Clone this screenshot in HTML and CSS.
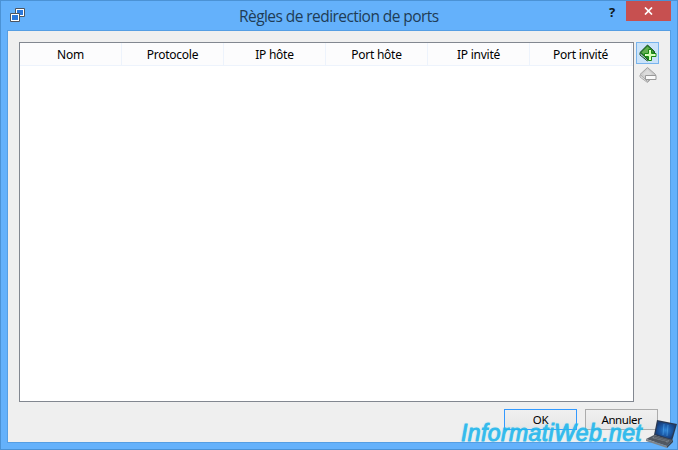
FILE: index.html
```
<!DOCTYPE html>
<html lang="fr">
<head>
<meta charset="utf-8">
<title>Règles de redirection de ports</title>
<link rel="stylesheet" href="styles.css">
</head>
<body>
<div class="window">
  <header class="titlebar">
    <svg class="app-icon" width="16" height="16" viewBox="0 0 16 16">
      <path d="M5.500 1.500h9v8h-9z" fill="#fff" stroke="#4c5560" />
      <path d="M7 3h6v5H7z" fill="#2b78dc"/>
      <path d="M.5 6.500h9v8h-9z" fill="#fff" stroke="#4c5560"/>
      <path d="M2 8h6v5H2z" fill="#2b78dc"/>
    </svg>
    <h1 class="title">Règles de redirection de ports</h1>
    <span class="help">?</span>
    <span class="close"><svg width="9" height="8" viewBox="0 0 9 8"><path d="M1 .5l7 7M8 .5l-7 7" stroke="#fff" stroke-width="1.7"/></svg></span>
  </header>
  <main class="content">
    <div class="editor">
      <div class="table">
        <div class="head">
          <span class="cell">Nom</span><span class="cell">Protocole</span><span class="cell">IP hôte</span><span class="cell">Port hôte</span><span class="cell">IP invité</span><span class="cell">Port invité</span>
        </div>
      </div>
      <div class="tools">
        <span class="tool active"><svg width="18" height="18" viewBox="0 0 18 18">
          <path d="M1 8.500L8.500 1l7 6.500v2L9 16z" fill="#27852a" stroke="#174d18"/>
          <path d="M2.500 8.500l6-6 5.500 5-5.500 5.500z" fill="#62ae50"/>
          <path d="M1 9v2l7.500 6 2-2" fill="none" stroke="#174d18"/>
          <path d="M9.500 5.500h3v4h4.500v3h-4.500v4h-3v-4H5.500v-3h4z" fill="#e9ffd9" stroke="#198a10"/>
          <path d="M11 7v8M7 11h8.500" stroke="#c8ff9e"/>
        </svg></span>
        <span class="tool"><svg width="18" height="18" viewBox="0 0 18 18">
          <path d="M1 8.500L8.500 1.500l8 7-8 7z" fill="#cfcfcf" stroke="#a2a2a2"/>
          <path d="M4 8l4.500-4.500L13 8l-5 4z" fill="#dcdcdc"/>
          <path d="M1 9v2l7.500 5.500 3-3" fill="none" stroke="#aaa"/>
          <path d="M6.500 9.500H17v4H6.500z" fill="#fafafa" stroke="#999"/>
        </svg></span>
      </div>
    </div>
    <div class="actions">
      <span class="button primary">OK</span>
      <span class="button">Annuler</span>
    </div>
  </main>
  <div class="watermark">
    <span class="brand">InformatiWeb.net</span>
    <svg class="laptop" width="33" height="30" viewBox="0 0 33 30">
      <defs><radialGradient id="screen"><stop offset="0" stop-color="#2f86d8"/><stop offset=".5" stop-color="#1d5fae"/><stop offset="1" stop-color="#173f7c"/></radialGradient></defs>
      <path d="M12 1l20 4-5 17-18-6z" fill="#2a3850"/>
      <path d="M13 2.500l17.500 3.500-4.500 14-15.500-5z" fill="url(#screen)"/>
      <path d="M19 5l-1 11M23 6l-1 11" stroke="#5aaeed" opacity=".5"/>
      <path d="M9 16l19 5-6 6L1 20z" fill="#515862"/>
      <path d="M8.500 17.500l16 4-2 2-16-4z" fill="#7b828b"/>
      <path d="M9 18.500l14 3.500M7 19.500l14 3.500" stroke="#40464e" stroke-width=".6"/>
      <path d="M1 20l21 7v2L1 22z" fill="#7d8389"/>
      <path d="M28 21v2l-6 6v-2z" fill="#3b434d"/>
    </svg>
  </div>
</div>
</body>
</html>
```

FILE: styles.css
```
* { box-sizing: border-box; }
body { margin: 0; font: 12px/16px "Noto Sans", "Open Sans", sans-serif; color: #000; }
.window { position: relative; width: 678px; height: 450px; padding: 0 6px 7px; background: #64b1fb; border: 1px solid #4b92d5; overflow: hidden; }
.titlebar { display: flex; height: 29px; margin-right: -2px; }
.app-icon { flex: none; margin: 6px 0 0 3px; }
.title { flex: none; width: 206px; margin: 4px 0 0 213px; font: 400 15.500px/22px "Open Sans", sans-serif; letter-spacing: -.56px; color: #203c56; white-space: nowrap; }
.help { width: 12px; margin: 0 8px 0 auto; font: bold 13px/22px "Open Sans", sans-serif; text-align: center; color: #101820; }
.close { display: flex; width: 45px; height: 20px; margin-right: 2px; align-items: center; justify-content: center; background: #c75050; }
.content { width: 664px; height: 413px; padding: 11px 11px 0; background: #efefef; border: 1px solid #559ee3; }
.editor { display: flex; gap: 2px; }
.table { flex: none; width: 615px; height: 360px; border: 1px solid #828790; background: #fff; }
.head { display: grid; grid-template-columns: repeat(6, 102px); height: 23px; border-bottom: 1px solid #edf3fc; background: #fcfcfd; }
.cell { padding-top: 4px; border-right: 1px solid #edf3fc; text-align: center; letter-spacing: -.25px; }
.tools { display: flex; flex-direction: column; }
.tool { display: flex; width: 23px; height: 22px; align-items: center; justify-content: center; }
.active { border: 1px solid #78b4ed; background: #cbe3f9; }
.actions { display: flex; justify-content: flex-end; gap: 8px; margin: 7px 1px 0 0; }
.button { width: 73px; height: 21px; border: 1px solid #acacac; background: linear-gradient(#f0f0f0, #e6e6e6); line-height: 20px; text-align: center; font-size: 11.500px; letter-spacing: -.4px; }
.primary { border-color: #3399ff; }
.watermark { position: absolute; left: 460px; top: 418px; display: flex; width: 217px; height: 30px; }
.brand { width: 184px; font: italic 23px/29px "Liberation Sans", Arial, sans-serif; letter-spacing: .4px; color: #20b6ec; -webkit-text-stroke: .9px #20b6ec; text-shadow: 0 0 2px #7ddcf8; opacity: .9; white-space: nowrap; }
.laptop { flex: none; }
```
